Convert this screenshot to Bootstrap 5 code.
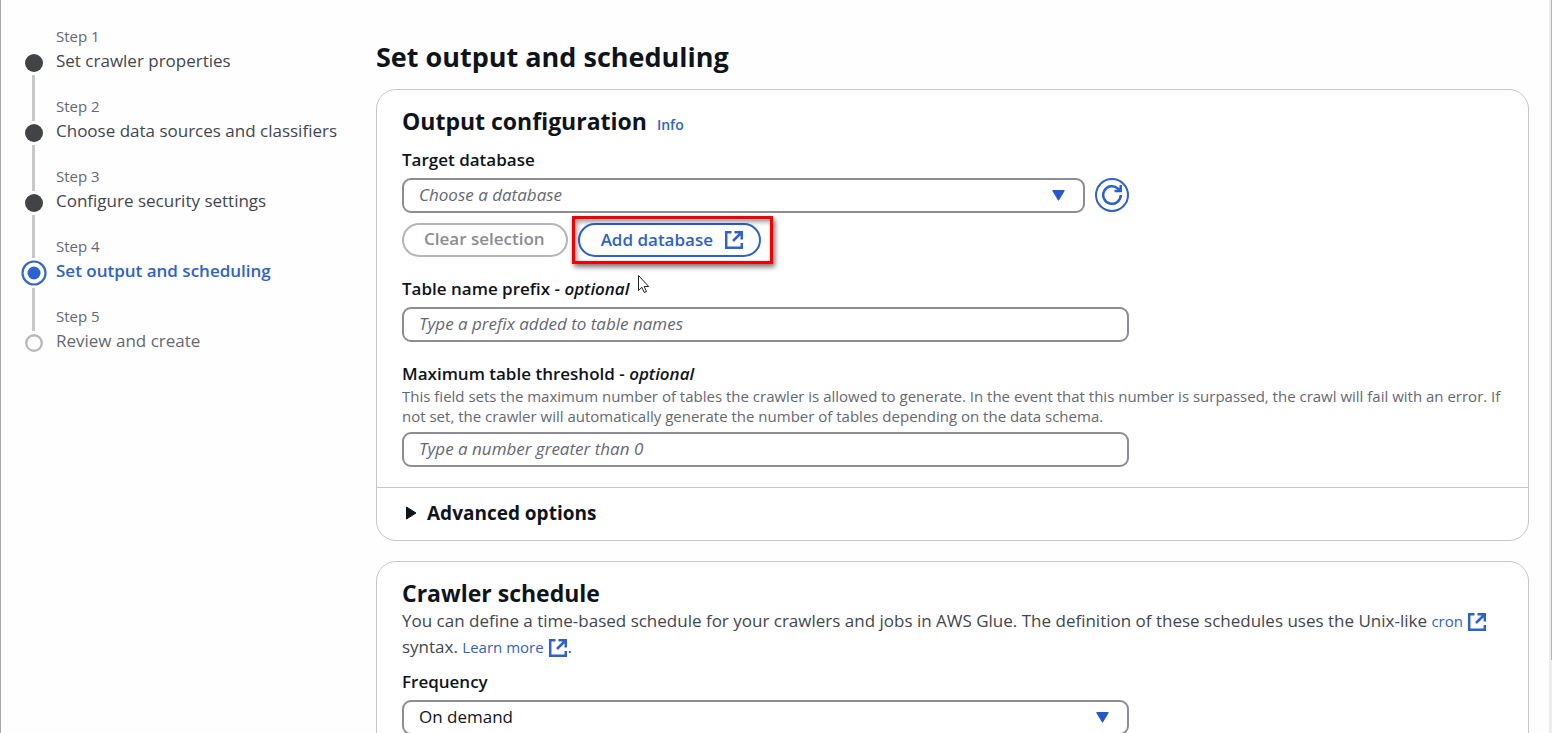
<!DOCTYPE html>
<html lang="en">
<head>
<meta charset="utf-8">
<meta name="viewport" content="width=device-width, initial-scale=1">
<title>Set output and scheduling</title>
<link href="https://cdn.jsdelivr.net/npm/bootstrap@5.3.0/dist/css/bootstrap.min.css" rel="stylesheet">
<style>
  :root { --ink: #0f141a; --body: #424650; --muted: #656871; --blue: #2f62c9; --line: #c6c6cd; --field: #8c8c94; }
  body { font-family: "Open Sans", "Noto Sans", sans-serif; font-size: 17px; line-height: 25px; color: var(--body); background: #fefefe; }
  a { color: var(--blue); text-decoration: none; }
  h1, h2, label { color: var(--ink); font-weight: 600; }
  h1, h2 { font-weight: 700; }
  h1 { font-size: 27px; line-height: 36px; }
  h2 { font-size: 23px; line-height: 30px; }
  label { line-height: 24px; margin-bottom: 6px; }
  .shell { height: 100vh; border-left: 1px solid #a9a9a9; }

  /* step navigation */
  .wizard-nav { flex: 0 0 375px; padding: 26px 0 0 16px; }
  .wizard-step { height: 70px; gap: 6px; }
  .step-track { width: 33px; }
  .seg { width: 3px; background: #c8c8cb; }
  .seg-top { height: 25px; }
  .wizard-step.active .seg-top { height: 22px; }
  .wizard-step:first-child .seg-top, .wizard-step:last-child .seg-end { visibility: hidden; }
  .step-no { font-size: 15px; line-height: 20px; color: var(--muted); }
  .step-name { line-height: 25px; padding-top: 2px; color: var(--body); }
  .wizard-step.active .step-name { color: var(--blue); font-weight: 600; }
  .wizard-step.todo .step-name { color: var(--muted); }

  /* panels */
  .content { padding: 39px 20px 0 0; }
  .panel { border: 1px solid var(--line); border-radius: 20px; background: #fff; }
  #output { margin-top: 14px; }
  .schedule { margin-top: 20px; }
  .panel-main { padding: 16px 25px 20px; }
  .panel-head { gap: 10px; margin-bottom: 11px; }
  .panel-foot { border-top: 1px solid var(--line); padding: 12px 25px 14px 28px; }
  .panel-foot button { color: var(--ink); font-weight: 700; font-size: 19px; line-height: 26px; gap: 10px; }
  .info-link { font-size: 14px; font-weight: 600; }
  .hint { font-size: 15px; line-height: 20px; color: var(--muted); margin-bottom: 6px; }
  .inline-link { font-size: 15px; }
  .ext { width: 20px; height: 20px; fill: none; stroke: currentColor; stroke-width: 2.5; }
  p .ext { vertical-align: -2px; margin: -3px 0; }

  /* form controls */
  .fields { --bs-gutter-x: 20px; }
  .field { height: 35px; border: 2px solid var(--field); border-radius: 9px; padding: 0 15px 2px; font-size: 17px; color: var(--ink); background-color: #fff; }
  .field::placeholder { color: var(--muted); font-style: italic; opacity: 1; }
  select.field { background: #fff url("data:image/svg+xml,%3Csvg xmlns='http://www.w3.org/2000/svg' viewBox='0 0 13 11'%3E%3Cpath fill='%232558ce' d='M1 0h11q1 0 .6 1L7.200 10q-.7 1-1.400 0L.4 1Q0 0 1 0z'/%3E%3C/svg%3E") no-repeat right 18px center / 13px 11px; }
  select.empty { color: var(--muted); font-style: italic; }
  .field-line, .btn-line { gap: 10px; }
  .field-line { margin-bottom: 10px; }
  .btn-line { margin-bottom: 19px; }
  .pill { height: 34px; border: 2px solid var(--blue); border-radius: 17px; padding: 0 21px 2px 20px; font-size: 17px; font-weight: 600; line-height: 28px; color: var(--blue); background: #fff; }
  .pill:disabled { color: #8c8c94; border-color: #b4b4bb; background: #fff; opacity: 1; }
  .add-btn { gap: 11px; padding: 0 15px 1px 21px; }
  .round-btn { flex: 0 0 34px; height: 34px; border: 2px solid var(--blue); background: #fff; }
  .max-label { margin: 20px 0 0; }
  .freq { margin-top: 10px; }

  /* annotation and pointer */
  .callout { position: absolute; inset: -7px -12px -7px -6px; border: 3px solid #f20000; box-shadow: 2px 3px 5px rgba(0,0,0,.55), inset 2px 3px 5px rgba(0,0,0,.4); pointer-events: none; }
  .pointer { position: absolute; left: 100%; top: -3px; margin-left: 8px; }

  .scroll-track { flex: 0 0 3px; background: #ececec; }
  .scroll-thumb { height: 90%; border-right: 1px solid #b5b5b5; }
</style>
<script src="https://cdn.jsdelivr.net/npm/bootstrap@5.3.0/dist/js/bootstrap.bundle.min.js"></script>
</head>
<body>
<svg width="0" height="0" class="d-none" aria-hidden="true">
  <symbol id="external" viewBox="0 0 20 20"><path d="M7.500 2.200H2.200v15.600h15.600V13M10.500 2.200h7.300V9.500M17.500 2.500L9 11"/></symbol>
</svg>
<div class="shell d-flex overflow-hidden">
  <nav class="wizard-nav" aria-label="Steps">
    <ol class="list-unstyled m-0">
      <li class="wizard-step d-flex">
        <div class="step-track d-flex flex-column align-items-center"><span class="seg seg-top"></span><svg width="24" height="24"><circle cx="12" cy="12" r="9" fill="#424347"/></svg><span class="seg seg-end flex-grow-1"></span></div>
        <div><div class="step-no">Step 1</div><a href="#" class="step-name d-block">Set crawler properties</a></div>
      </li>
      <li class="wizard-step d-flex">
        <div class="step-track d-flex flex-column align-items-center"><span class="seg seg-top"></span><svg width="24" height="24"><circle cx="12" cy="12" r="9" fill="#424347"/></svg><span class="seg seg-end flex-grow-1"></span></div>
        <div><div class="step-no">Step 2</div><a href="#" class="step-name d-block">Choose data sources and classifiers</a></div>
      </li>
      <li class="wizard-step d-flex">
        <div class="step-track d-flex flex-column align-items-center"><span class="seg seg-top"></span><svg width="24" height="24"><circle cx="12" cy="12" r="9" fill="#424347"/></svg><span class="seg seg-end flex-grow-1"></span></div>
        <div><div class="step-no">Step 3</div><a href="#" class="step-name d-block">Configure security settings</a></div>
      </li>
      <li class="wizard-step active d-flex" aria-current="step">
        <div class="step-track d-flex flex-column align-items-center"><span class="seg seg-top"></span><svg width="30" height="30"><circle cx="15" cy="15" r="11.500" fill="#fff" stroke="#3b66c4" stroke-width="2.200"/><circle cx="15" cy="15" r="6.500" fill="#2b63d2"/></svg><span class="seg seg-end flex-grow-1"></span></div>
        <div><div class="step-no">Step 4</div><span class="step-name d-block">Set output and scheduling</span></div>
      </li>
      <li class="wizard-step todo d-flex">
        <div class="step-track d-flex flex-column align-items-center"><span class="seg seg-top"></span><svg width="24" height="24"><circle cx="12" cy="12" r="7.800" fill="#fff" stroke="#b9b9bd" stroke-width="2.400"/></svg><span class="seg seg-end flex-grow-1"></span></div>
        <div><div class="step-no">Step 5</div><span class="step-name d-block">Review and create</span></div>
      </li>
    </ol>
  </nav>

  <main class="content flex-grow-1">
    <h1 class="mb-0">Set output and scheduling</h1>

    <section class="panel" id="output">
      <div class="panel-main">
        <div class="panel-head d-flex align-items-baseline"><h2 class="m-0">Output configuration</h2><a href="#" class="info-link">Info</a></div>
        <div class="row fields">
          <div class="col-8">
            <label for="db" class="d-block">Target database</label>
            <div class="d-flex field-line">
              <select id="db" class="field empty form-select"><option>Choose a database</option></select>
              <button type="button" class="round-btn rounded-circle p-0 d-flex align-items-center justify-content-center" aria-label="Refresh">
                <svg width="22" height="22" fill="none" stroke="#2b60cc" stroke-width="2.500"><path d="M19.800 11A8.800 8.800 0 1 1 17 4.600L19 6.500M19.700 1v6H13.500"/></svg>
              </button>
            </div>
            <div class="d-flex btn-line">
              <button type="button" class="pill" disabled>Clear selection</button>
              <div class="position-relative">
                <button type="button" class="pill d-flex align-items-center add-btn">Add database <svg class="ext"><use href="#external"/></svg></button>
                <div class="callout"></div>
              </div>
            </div>
            <label for="prefix" class="position-relative">Table name prefix - <em>optional</em>
              <svg class="pointer" width="13" height="20" viewBox="0 0 13 20"><path d="M1.500 1.500v15l3.400-3.200 2.300 5.200 2.300-1-2.300-5h4.500z" fill="#fff" stroke="#222" stroke-width="1"/></svg>
            </label>
            <input id="prefix" type="text" class="field form-control" placeholder="Type a prefix added to table names">
          </div>
        </div>
        <label for="max" class="d-block max-label">Maximum table threshold - <em>optional</em></label>
        <div class="hint">This field sets the maximum number of tables the crawler is allowed to generate. In the event that this number is surpassed, the crawl will fail with an error. If not set, the crawler will automatically generate the number of tables depending on the data schema.</div>
        <div class="row fields"><div class="col-8"><input id="max" type="text" class="field form-control" placeholder="Type a number greater than 0"></div></div>
      </div>
      <div class="panel-foot">
        <button type="button" class="btn p-0 border-0 d-flex align-items-center" aria-expanded="false"><svg width="12" height="14"><path d="M1.500 1L11 7l-9.500 6z" fill="#0f141a" stroke="#0f141a" stroke-linejoin="round"/></svg>Advanced options</button>
      </div>
    </section>

    <section class="panel schedule">
      <div class="panel-main">
        <h2 class="m-0">Crawler schedule</h2>
        <p class="m-0">You can define a time-based schedule for your crawlers and jobs in AWS Glue. The definition of these schedules uses the Unix-like <a href="#" class="inline-link text-nowrap">cron <svg class="ext"><use href="#external"/></svg></a> syntax. <a href="#" class="inline-link text-nowrap">Learn more <svg class="ext"><use href="#external"/></svg></a>.</p>
        <div class="row fields freq"><div class="col-8">
          <label for="freq" class="d-block">Frequency</label>
          <select id="freq" class="field form-select"><option>On demand</option></select>
        </div></div>
      </div>
    </section>
  </main>
  <div class="scroll-track"><div class="scroll-thumb"></div></div>
</div>
</body>
</html>
